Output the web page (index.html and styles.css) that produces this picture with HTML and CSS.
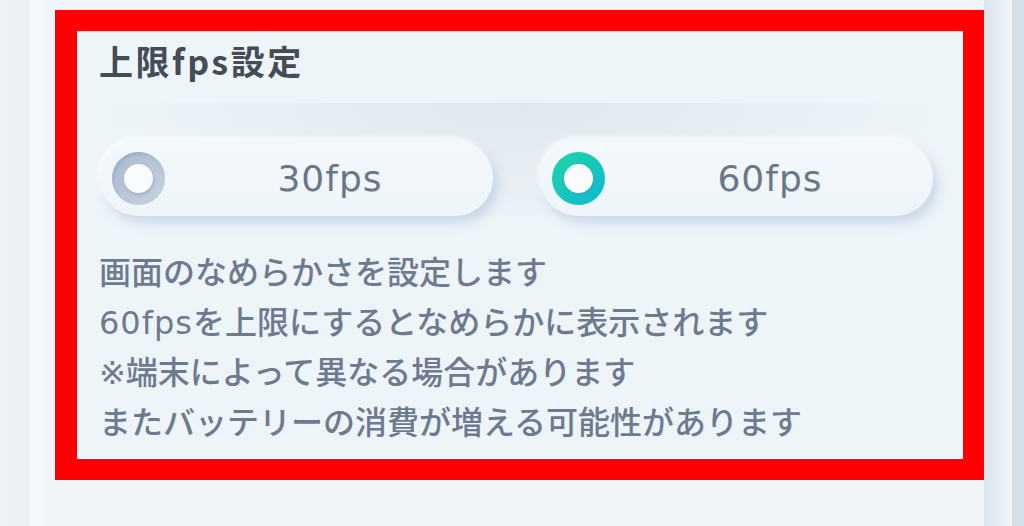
FILE: index.html
```html
<!DOCTYPE html>
<html lang="ja">
<head>
<meta charset="utf-8">
<title>上限fps設定</title>
<link rel="stylesheet" href="styles.css">
</head>
<body>
<div class="page">
  <div class="gutter"></div>
  <div class="strip"></div>
  <main class="panel">
    <section class="frame">
      <h2 class="title">上限fps設定</h2>
      <div class="options">
        <div class="pill">
          <span class="radio"><span class="dot"></span></span>
          <span class="label">30fps</span>
        </div>
        <div class="pill">
          <span class="radio on"><span class="dot"></span></span>
          <span class="label">60fps</span>
        </div>
      </div>
      <p class="desc">画面のなめらかさを設定します<br><span class="num">60fps</span>を上限にするとなめらかに表示されます<br>※端末によって異なる場合があります<br>またバッテリーの消費が増える可能性があります</p>
    </section>
  </main>
  <div class="edge"></div>
  <div class="rim"></div>
</div>
</body>
</html>
```
FILE: styles.css
```css
html, body {
  margin: 0;
  padding: 0;
}
body {
  width: 1024px;
  height: 526px;
  overflow: hidden;
  background: #eef3f7;
  font-family: "DejaVu Sans", "Noto Sans CJK JP", sans-serif;
}
.page {
  display: flex;
  height: 526px;
}
.gutter {
  flex: 0 0 30px;
  background: linear-gradient(to right, #eef3f7, #e9eff4);
}
.strip {
  flex: 0 0 13px;
  background: #f4f8fb;
}
.panel {
  flex: 0 0 941px;
  background: #eef4f8;
  padding: 10px 0 0 12px;
  box-sizing: border-box;
}
.edge {
  flex: 0 0 28px;
  background: linear-gradient(to right, #dbe4ec, #e8eff4 60%, #eef3f7);
}
.rim {
  flex: 1;
  background: #d6dee7;
}
.frame {
  box-sizing: border-box;
  width: 929px;
  height: 470px;
  border: 21px solid #ff0000;
  border-left-width: 22px;
  background: #eef5f9;
  padding-top: 10px;
}
.title {
  margin: 0;
  padding-left: 22px;
  font-family: "Noto Sans CJK JP", sans-serif;
  font-size: 34px;
  line-height: 40px;
  font-weight: 700;
  letter-spacing: 2.5px;
  color: #454b57;
}
.options {
  margin-top: 22px;
  padding: 37px 28px 0 23px;
  display: flex;
  gap: 47px;
  background:
    radial-gradient(ellipse 48% 120% at 50% 0%, #e0e8ef 0%, rgba(227,235,241,0.8) 45%, rgba(238,245,249,0) 100%);
}
.pill {
  flex: 0 0 393px;
  height: 76px;
  box-sizing: border-box;
  border-radius: 38px;
  background: linear-gradient(to bottom, #f3f8fb, #eef5f9);
  box-shadow: 5px 7px 12px rgba(160, 180, 208, 0.45), -2px -3px 5px rgba(255, 255, 255, 0.9);
  display: flex;
  align-items: center;
  padding-left: 12px;
}
.radio {
  width: 53px;
  height: 53px;
  border-radius: 50%;
  background: linear-gradient(135deg, #a8b7cd, #c9d4e3);
  display: flex;
  align-items: center;
  justify-content: center;
  box-shadow: inset 1px 2px 3px rgba(120, 140, 170, 0.35);
}
.radio.on {
  background: linear-gradient(135deg, #20d3a2, #0cbad6);
  box-shadow: none;
}
.dot {
  width: 29px;
  height: 29px;
  border-radius: 50%;
  background: #f9fbfd;
  box-shadow: 1px 2px 3px rgba(110, 130, 160, 0.35);
}
.label {
  flex: 1;
  text-align: center;
  font-size: 36px;
  letter-spacing: 1px;
  color: #6a768a;
  padding-left: 2px;
}
.desc {
  margin: 32px 0 0 0;
  padding-left: 22px;
  font-size: 32px;
  line-height: 50px;
  font-weight: 500;
  color: #6d7a90;
}
.num {
  letter-spacing: 1px;
}
```
